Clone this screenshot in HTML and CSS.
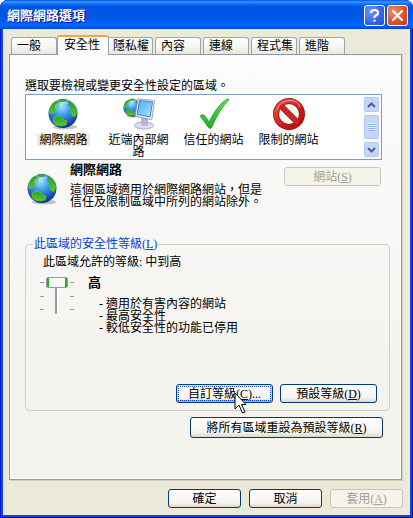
FILE: index.html
```html
<!DOCTYPE html>
<html lang="zh-Hant">
<head>
    <meta charset="UTF-8">
    <meta name="viewport" content="width=device-width, initial-scale=1.0">
    <title>網際網路選項</title>
    <link rel="stylesheet" href="styles.css">
</head>
<body>
    <!-- shared icon -->
    <svg class="defs" width="0" height="0" aria-hidden="true">
        <defs>
            <radialGradient id="sea" cx="45%" cy="25%" r="75%">
                <stop offset="0" stop-color="#a4e4ff"/>
                <stop offset=".4" stop-color="#3f9fe8"/>
                <stop offset=".8" stop-color="#1f50bc"/>
                <stop offset="1" stop-color="#1a2c80"/>
            </radialGradient>
            <linearGradient id="land" x1="0" y1="0" x2="0" y2="1">
                <stop offset="0" stop-color="#2f9a32"/>
                <stop offset="1" stop-color="#52cc22"/>
            </linearGradient>
            <linearGradient id="screen" x1="0" y1="0" x2="1" y2="1">
                <stop offset="0" stop-color="#4aa8ee"/>
                <stop offset="1" stop-color="#a4ecff"/>
            </linearGradient>
            <linearGradient id="tick" x1="0" y1="0" x2="0" y2="1">
                <stop offset="0" stop-color="#5fdc52"/>
                <stop offset="1" stop-color="#25a824"/>
            </linearGradient>
            <linearGradient id="stop" x1="0" y1="0" x2="1" y2="1">
                <stop offset="0" stop-color="#e85050"/>
                <stop offset=".6" stop-color="#cc1c1c"/>
                <stop offset="1" stop-color="#a80c0c"/>
            </linearGradient>
        </defs>
        <symbol id="globe" viewBox="0 0 32 32">
            <ellipse cx="17" cy="29" rx="12" ry="2.500" fill="#777" opacity=".45"/>
            <circle cx="15" cy="15.500" r="14.500" fill="url(#sea)"/>
            <path d="M1 14Q2 6 8 3l4 1.500-1 4-3 2-1 3-4 3z" fill="url(#land)"/>
            <path d="M10 2q4-2 9-.5l-2 2-4 1z" fill="#3aa436"/>
            <path d="M21 3q5 2 7.500 7l.5 5-2 4-3-1-2-5 1-3-3-3z" fill="url(#land)"/>
            <path d="M5 20l4-2 4 1 3 3 3 1-1 4-5 1-5-1-3-3z" fill="url(#land)" stroke="#6ad83a" stroke-width=".6"/>
            <path d="M7 7c4-4 10-4 14-1-5 0-9 1-14 5z" fill="#fff" opacity=".35"/>
        </symbol>
    </svg>

    <div class="window">
        <header class="titlebar">
            <h1>網際網路選項</h1>
            <button class="caption help" aria-label="說明">
                <svg viewBox="0 0 19 19"><path d="M6 7q0-3 3.500-3t3.500 3q0 1.500-2 2.500t-1.500 2.500M9.500 13.800v2" fill="none" stroke="#fff" stroke-width="2.200"/></svg>
            </button>
            <button class="caption close" aria-label="關閉">
                <svg viewBox="0 0 19 19"><path d="M5 5l9 9M14 5l-9 9" fill="none" stroke="#fff" stroke-width="2.200" stroke-linecap="round"/></svg>
            </button>
        </header>

        <div class="content">
            <nav class="tabs">
                <button class="tab">一般</button>
                <button class="tab active">安全性</button>
                <button class="tab">隱私權</button>
                <button class="tab">內容</button>
                <button class="tab">連線</button>
                <button class="tab">程式集</button>
                <button class="tab">進階</button>
            </nav>

            <main class="panel">
                <p>選取要檢視或變更安全性設定的區域。</p>
                <div class="zones">
                    <div class="zone-list">
                        <div class="zone selected">
                            <svg class="icon"><use href="#globe"/></svg>
                            <span>網際網路</span>
                        </div>
                        <div class="zone">
                            <svg class="icon" viewBox="0 0 32 32">
                                <use href="#globe" width="20" height="20"/>
                                <ellipse cx="21" cy="27.500" rx="9.500" ry="3.500" fill="#dcdef0" stroke="#9a9cc0" stroke-width=".8"/>
                                <path d="M18 19l7 1v7q-3 2-7 0z" fill="#b4b6d8"/>
                                <path d="M15 .8L31.500 2.500 29 21 27 21.500 12 18z" fill="#eceef8" stroke="#8c90b8" stroke-width=".8"/>
                                <path d="M16.500 2.500L29.500 4 27.200 18.800 14 16.500z" fill="url(#screen)" stroke="#2e6fc0" stroke-width=".8"/>
                            </svg>
                            <span>近端內部網路</span>
                        </div>
                        <div class="zone">
                            <svg class="icon" viewBox="0 0 32 32">
                                <path d="M2 18q2-2 4-1 3 3 5 7Q18 9 28 1.500q2-1 3 0Q21 12 14 29q-2 3-4 0Q6 23 2 18z" fill="url(#tick)" stroke="#1f9a26" stroke-width=".7"/>
                            </svg>
                            <span>信任的網站</span>
                        </div>
                        <div class="zone">
                            <svg class="icon" viewBox="0 0 32 32">
                                <circle cx="16" cy="16" r="13" fill="#f6f6f6" stroke="#9c1010" stroke-width="6"/>
                                <path d="M7 7l18 18" stroke="#9c1010" stroke-width="6"/>
                                <circle cx="16" cy="16" r="13" fill="none" stroke="url(#stop)" stroke-width="4.600"/>
                                <path d="M7 7l18 18" stroke="#d02424" stroke-width="4.600"/>
                                <path d="M4 12Q7 3 16 2.500T27 9" fill="none" stroke="#f49a9a" stroke-width="1"/>
                            </svg>
                            <span>限制的網站</span>
                        </div>
                    </div>
                    <div class="scrollbar">
                        <button class="arrow" aria-label="向上"><svg viewBox="0 0 9 6"><path d="M1 5l3.500-3.500L8 5"/></svg></button>
                        <div class="thumb"></div>
                        <button class="arrow" aria-label="向下"><svg viewBox="0 0 9 6"><path d="M1 1l3.500 3.500L8 1"/></svg></button>
                    </div>
                </div>

                <section class="summary">
                    <svg class="icon"><use href="#globe"/></svg>
                    <div class="about">
                        <h2>網際網路</h2>
                        <p>這個區域適用於網際網路網站，但是<br>信任及限制區域中所列的網站除外。</p>
                    </div>
                    <button class="btn" disabled>網站(<u>S</u>)</button>
                </section>

                <fieldset class="level">
                    <legend>此區域的安全性等級(<u>L</u>)</legend>
                    <label for="level">此區域允許的等級: 中到高</label>
                    <div class="setting">
                        <div class="slider">
                            <div class="ticks"><i></i><i></i><i></i></div>
                            <input type="range" id="level" min="0" max="2" value="2">
                            <div class="ticks"><i></i><i></i><i></i></div>
                        </div>
                        <div class="detail">
                            <h2>高</h2>
                            <ul>
                                <li>- 適用於有害內容的網站</li>
                                <li>- 最高安全性</li>
                                <li>- 較低安全性的功能已停用</li>
                            </ul>
                        </div>
                    </div>
                    <div class="actions">
                        <button class="btn focused">自訂等級(<u>C</u>)...
                            <svg class="cursor" viewBox="0 0 13 22"><path d="M1 1v16l4-4 3.500 8 2.500-1-3.500-7.500H12z" fill="#fff" stroke="#000"/></svg>
                        </button>
                        <button class="btn">預設等級(<u>D</u>)</button>
                    </div>
                </fieldset>
                <button class="btn reset">將所有區域重設為預設等級(<u>R</u>)</button>
            </main>

            <footer class="footer">
                <button class="btn">確定</button>
                <button class="btn">取消</button>
                <button class="btn" disabled>套用(<u>A</u>)</button>
            </footer>
        </div>
    </div>
</body>
</html>
```

FILE: styles.css
```css
* {
    box-sizing: border-box;
}
body {
    margin: 0;
    background: #fff;
    color: #000;
    font: 12px/12px "Liberation Serif", "Noto Sans CJK TC", sans-serif;
}
button {
    font: inherit;
    color: inherit;
    padding: 0;
    white-space: nowrap;
}
p, h1, h2, ul {
    margin: 0;
    padding: 0;
}
h1, h2 {
    font-size: 13px;
    line-height: 12px;
    font-weight: bold;
}
.defs {
    position: absolute;
}
.icon {
    display: block;
    width: 32px;
    height: 32px;
    flex: none;
}

/* window frame */
.window {
    display: flex;
    flex-direction: column;
    min-height: 100vh;
    background: #0a46e0;
    border-radius: 8px 8px 0 0;
    overflow: hidden;
    box-shadow: inset 1px 0 #0019cf, inset -1px 0 #00138c, inset 0 -1px #00138c;
    padding: 0 3px 3px;
}
.titlebar {
    display: flex;
    align-items: center;
    gap: 2px;
    height: 29px;
    margin: 0 -3px;
    padding: 2px 5px 0 7px;
    background: linear-gradient(#0058e6 0, #3a93ff 7%, #0c6cf4 14%, #0055e3 25%, #0054e3 55%, #0066ff 85%, #0055ea 95%, #0042c8 100%);
}
.titlebar h1 {
    flex: 1;
    color: #fff;
    text-shadow: 1px 1px #0f1089;
}
.caption {
    width: 21px;
    height: 21px;
    border: 1px solid #fff;
    border-radius: 3px;
}
.caption svg {
    display: block;
    width: 19px;
    height: 19px;
}
.help {
    background: radial-gradient(circle at 30% 30%, #6f96f8, #3264e8 60%, #1f50d8);
}
.close {
    background: radial-gradient(circle at 30% 30%, #f09070, #e0512c 55%, #c03a14);
}
.content {
    flex: 1;
    display: flex;
    flex-direction: column;
    background: #ece9d8;
    padding: 6px 7px 7px 6px;
}

/* tabs */
.tabs {
    display: flex;
    align-items: flex-end;
    gap: 2px;
    padding-left: 2px;
    margin-bottom: -1px;
}
.tab {
    width: 46px;
    height: 18px;
    border: 1px solid #91a7b4;
    border-bottom-color: #919b9c;
    border-radius: 3px 3px 0 0;
    background: linear-gradient(#fff, #f6f5f0 60%, #e8e6dc);
    padding-left: 5px;
    text-align: left;
}
.tab.active {
    z-index: 1;
    width: 52px;
    height: 20px;
    margin: 0 -4px 0 -2px;
    border-top: 2px solid #f0a830;
    border-bottom: 0;
    background: #fcfcfe;
    padding: 0 0 2px 6px;
}
.panel {
    flex: 1;
    display: flex;
    flex-direction: column;
    border: 1px solid #919b9c;
    box-shadow: inset -1px -1px #fff, inset 1px 0 #fff, 1px 1px #d0cebf;
    background: linear-gradient(#fcfcfe, #f4f3ee 75%);
    margin-right: 1px;
    padding: 25px 11px 41px 15px;
}

/* zone list */
.zones {
    display: flex;
    height: 66px;
    margin: 2px 8px 0 0;
    border: 1px solid #7f9db9;
    background: #fff;
    padding: 1px 1px 1px 0;
}
.zone-list {
    flex: 1;
    display: flex;
    overflow: hidden;
}
.zone {
    width: 75px;
    display: flex;
    flex-direction: column;
    align-items: center;
    gap: 4px;
    padding: 2px 7px 0;
    text-align: center;
}
.zone.selected span {
    background: #ece9d8;
    padding: 0 2px;
}
.scrollbar {
    width: 17px;
    display: flex;
    flex-direction: column;
    gap: 1px;
    background: #f8f8f5;
}
.arrow, .thumb {
    border: 1px solid #fff;
    border-radius: 3px;
    background: #c6d5fd;
    box-shadow: inset 0 0 0 1px #b4c8f6;
}
.arrow {
    display: flex;
    align-items: center;
    justify-content: center;
    height: 17px;
}
.arrow svg {
    width: 9px;
    height: 6px;
    fill: none;
    stroke: #4d6185;
    stroke-width: 2;
}
.thumb {
    flex: 1;
    display: flex;
    align-items: center;
    justify-content: center;
}
.thumb::before {
    content: "";
    width: 7px;
    height: 8px;
    background: repeating-linear-gradient(#eef4fe 0 1px, #8cb0f8 1px 2px);
}

/* zone summary */
.summary {
    display: flex;
    margin: 4px 9px 0 2px;
}
.summary .icon {
    margin-top: 9px;
}
.about {
    flex: 1;
    margin-left: 11px;
}
.about p {
    margin-top: 8px;
}
.summary .btn {
    margin-top: 3px;
}

/* buttons */
.btn {
    position: relative;
    min-width: 97px;
    height: 19px;
    border: 1px solid #003c74;
    border-radius: 3px;
    background: linear-gradient(#fff, #f5f4ef 75%, #dcd8cc);
}
.btn:disabled {
    color: #a1a192;
    border-color: #c9c7ba;
    background: #f5f4ea;
}
.btn.focused {
    box-shadow: inset 0 1px #cee7ff, inset 0 -2px #e5a840, inset 1px 0 #fbc761, inset -1px 0 #fbc761;
    outline: 1px dotted #1848c8;
    outline-offset: -3px;
}
.cursor {
    position: absolute;
    left: 57px;
    top: 7px;
    z-index: 2;
    width: 13px;
    height: 22px;
}

/* security level */
.level {
    min-width: 0;
    margin: 30px 0 0;
    border: 1px solid #d0d0bf;
    border-radius: 4px;
    padding: 6px 12px 7px 17px;
}
.level legend {
    color: #0046d5;
    margin-left: -10px;
    padding: 0 1px;
}
.level label {
    display: block;
}
.setting {
    display: flex;
    align-items: flex-start;
    gap: 14px;
    margin: 9px 0 0 -3px;
}
.slider {
    display: flex;
    gap: 2px;
}
.slider input {
    appearance: none;
    writing-mode: vertical-lr;
    direction: rtl;
    width: 22px;
    height: 37px;
    margin: 0;
    background: none;
}
.slider input::-webkit-slider-runnable-track {
    width: 22px;
    height: 37px;
    background: linear-gradient(90deg, #9d9c99 2px, #fff 2px) center / 4px 100% no-repeat;
}
.slider input::-webkit-slider-thumb {
    appearance: none;
    width: 22px;
    height: 11px;
    border: 1px solid #8a9ea8;
    border-radius: 2px;
    background: linear-gradient(90deg, #21b421 2px, #f8f8f5 2px 18px, #21b421 18px);
}
.ticks {
    display: flex;
    flex-direction: column;
    justify-content: space-between;
    width: 4px;
    padding: 5px 0 4px;
}
.ticks i {
    height: 1px;
    background: #9d9c99;
}
.detail h2 {
    margin-bottom: 9px;
}
.detail ul {
    margin-left: 11px;
    list-style: none;
}
.actions {
    display: flex;
    justify-content: flex-end;
    gap: 7px;
    margin-top: 50px;
}
.reset {
    align-self: flex-end;
    min-width: 193px;
    height: 21px;
    margin: 6px 7px 0 0;
}
.footer {
    display: flex;
    justify-content: flex-end;
    gap: 8px;
    margin-top: 9px;
}
.footer .btn {
    min-width: 73px;
}
```
